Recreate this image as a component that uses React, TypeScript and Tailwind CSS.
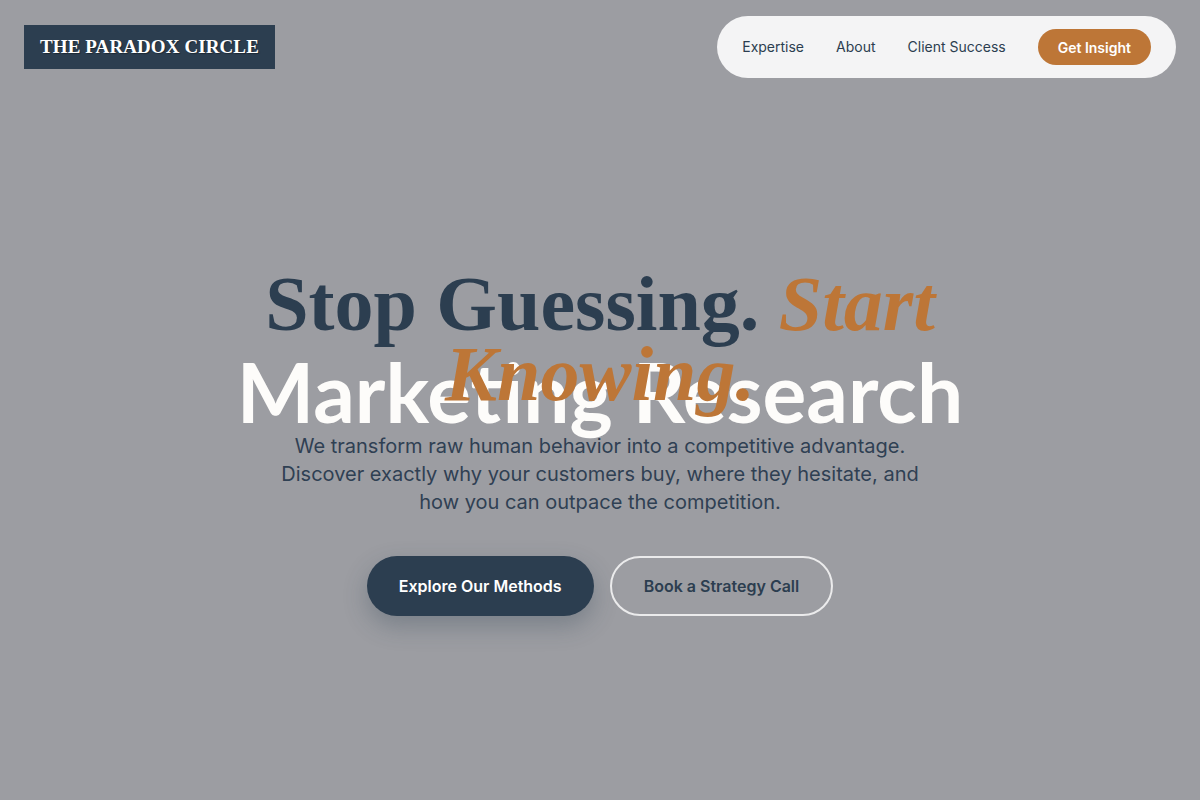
import React from "react";

export default function App() {
  return (
    <div className="min-h-screen w-full bg-[#9c9da2] font-['Inter',sans-serif]">
      <header className="flex items-center justify-between px-6 pt-4">
        <div className="flex h-[44px] items-center bg-[#2c3e50] px-4">
          <span className="font-['Liberation_Serif',serif] text-[19px] font-bold tracking-[0.1px] text-white [text-shadow:1px_1px_1px_rgba(0,0,0,0.35)]">
            THE PARADOX CIRCLE
          </span>
        </div>
        <nav className="flex h-[62px] items-center gap-8 rounded-full bg-[#f4f4f5] px-[25px]">
          <a className="text-[14px] leading-5 text-[#2c3e50]">Expertise</a>
          <a className="text-[14px] leading-5 text-[#2c3e50]">About</a>
          <a className="text-[14px] leading-5 text-[#2c3e50]">Client Success</a>
          <a className="flex h-9 items-center rounded-full bg-[#bd7637] px-5 text-[14px] font-semibold text-white">
            Get Insight
          </a>
        </nav>
      </header>

      <main className="flex flex-col items-center pt-[191px] text-center">
        <h1 className="relative z-10 max-w-[800px] font-['Liberation_Serif',serif] text-[78px] font-bold leading-[70px] text-[#2c3e50]">
          Stop Guessing. <em className="text-[#bd7637]">Start Knowing.</em>
        </h1>
        <div className="relative z-0 -mt-[58px] font-['Lato',sans-serif] text-[82px] font-bold leading-[81px] text-[#fdfcfa]">
          Marketing Research
        </div>
        <p className="max-w-[660px] text-[20px] leading-7 text-[#2f4053]">
          We transform raw human behavior into a competitive advantage. Discover exactly why your
          customers buy, where they hesitate, and how you can outpace the competition.
        </p>
        <div className="mt-10 flex items-center gap-4">
          <button className="rounded-full bg-[#2c3e50] px-8 py-[18px] text-base font-semibold leading-6 text-white shadow-[0_10px_25px_rgba(44,62,80,0.3)]">
            Explore Our Methods
          </button>
          <button className="rounded-full border-2 border-[#ebebec] px-8 py-[16px] text-base font-semibold leading-6 text-[#2c3e50]">
            Book a Strategy Call
          </button>
        </div>
      </main>
    </div>
  );
}
